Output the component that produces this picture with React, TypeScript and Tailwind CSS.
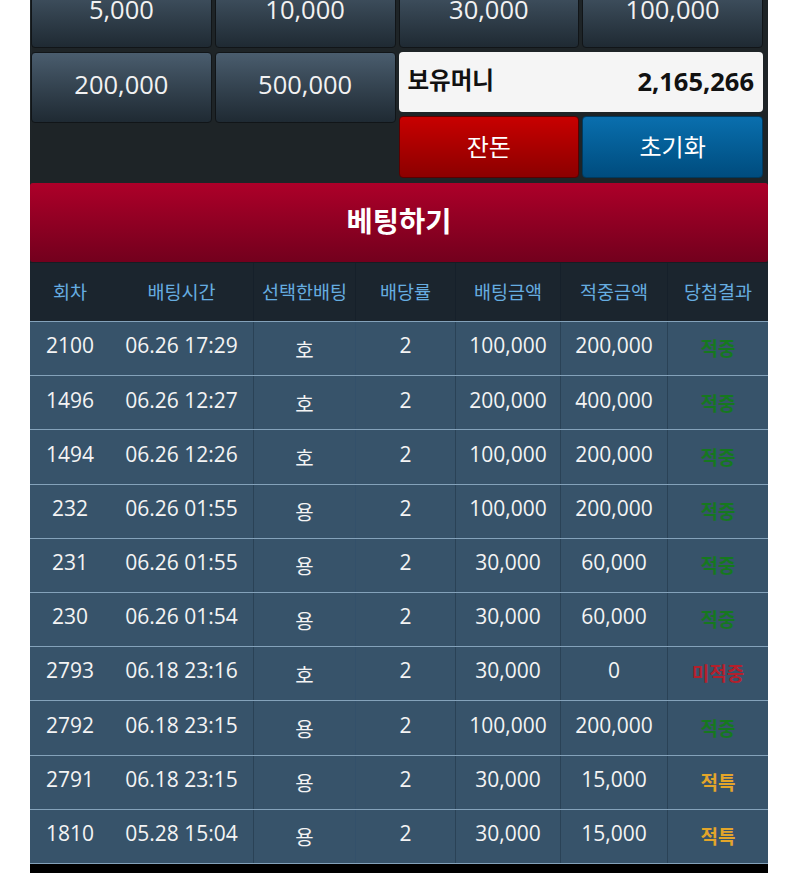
import React from 'react';

type Row = {
  round: string;
  time: string;
  pick: string;
  odds: string;
  bet: string;
  win: string;
  result: '적중' | '미적중' | '적특';
};

const ROWS: Row[] = [
  { round: '2100', time: '06.26 17:29', pick: '호', odds: '2', bet: '100,000', win: '200,000', result: '적중' },
  { round: '1496', time: '06.26 12:27', pick: '호', odds: '2', bet: '200,000', win: '400,000', result: '적중' },
  { round: '1494', time: '06.26 12:26', pick: '호', odds: '2', bet: '100,000', win: '200,000', result: '적중' },
  { round: '232', time: '06.26 01:55', pick: '용', odds: '2', bet: '100,000', win: '200,000', result: '적중' },
  { round: '231', time: '06.26 01:55', pick: '용', odds: '2', bet: '30,000', win: '60,000', result: '적중' },
  { round: '230', time: '06.26 01:54', pick: '용', odds: '2', bet: '30,000', win: '60,000', result: '적중' },
  { round: '2793', time: '06.18 23:16', pick: '호', odds: '2', bet: '30,000', win: '0', result: '미적중' },
  { round: '2792', time: '06.18 23:15', pick: '용', odds: '2', bet: '100,000', win: '200,000', result: '적중' },
  { round: '2791', time: '06.18 23:15', pick: '용', odds: '2', bet: '30,000', win: '15,000', result: '적특' },
  { round: '1810', time: '05.28 15:04', pick: '용', odds: '2', bet: '30,000', win: '15,000', result: '적특' },
];

const HEADERS = ['회차', '배팅시간', '선택한배팅', '배당률', '배팅금액', '적중금액', '당첨결과'];

// column widths follow the screenshot (sum 738)
const COLS = 'grid grid-cols-[80px_143px_102px_100px_105px_107px_101px]';

const RESULT_COLOR: Record<Row['result'], string> = {
  적중: 'text-[#16781f]',
  미적중: 'text-[#b3202c]',
  적특: 'text-[#e3a52a]',
};

function ChipButton({ label }: { label: string }) {
  return (
    <button className="h-[71px] rounded-[4px] border border-[#111518] bg-gradient-to-b from-[#4a5d6e] to-[#1f2a33] pb-[7px] text-[25.5px] text-[#f2f2f2]">
      {label}
    </button>
  );
}

export default function App() {
  return (
    <div
      className="min-h-[875px] overflow-hidden bg-white"
      style={{ fontFamily: '"Open Sans", "Noto Sans CJK KR", sans-serif' }}
    >
      <div className="ml-[30px] w-[738px]">
        {/* chip panel */}
        <div className="-mt-[23px] bg-[#1e2427] pb-[4px] pl-[1px] pr-[5px]">
          <div className="grid grid-cols-4 gap-[3px]">
            <ChipButton label="5,000" />
            <ChipButton label="10,000" />
            <ChipButton label="30,000" />
            <ChipButton label="100,000" />
          </div>
          <div className="mt-[4px] grid grid-cols-4 items-start gap-[3px]">
            <ChipButton label="200,000" />
            <ChipButton label="500,000" />
            <div className="col-span-2 flex flex-col gap-[4px]">
              <div className="flex h-[60px] items-center justify-between rounded-[4px] bg-[#f5f5f5] px-[9px] pb-[2px] text-[#111]">
                <span className="text-[23.5px] font-bold">보유머니</span>
                <span className="text-[25.5px] font-bold">2,165,266</span>
              </div>
              <div className="grid h-[62px] grid-cols-2 gap-[3px]">
                <button className="rounded-[4px] border border-[#5a0000] bg-gradient-to-b from-[#c80000] to-[#8c0000] text-[24px] text-white">
                  잔돈
                </button>
                <button className="rounded-[4px] border border-[#003a5e] bg-gradient-to-b from-[#0a6fae] to-[#004c7e] text-[24px] text-white">
                  초기화
                </button>
              </div>
            </div>
          </div>
        </div>

        {/* bet button */}
        <div className="border-t border-[#1e2427] bg-[#1e2427]">
          <button className="flex h-[79px] w-full items-center justify-center rounded-[3px] bg-gradient-to-b from-[#ad0029] to-[#73001d] pb-[2px] text-[28.5px] font-bold text-white">
            베팅하기
          </button>
        </div>

        {/* history table */}
        <div className="border-t border-[#161d23] bg-[#1b252e]">
          <div className={`${COLS} h-[58px] items-center text-center text-[18.5px] text-[#66ade0]`}>
            {HEADERS.map((h, i) => (
              <div
                key={h}
                className={i >= 2 ? 'flex h-full items-center justify-center border-l border-[#16202a]' : 'flex h-full items-center justify-center'}
              >
                {h}
              </div>
            ))}
          </div>
        </div>
        <div className="bg-[#37536a]">
          {ROWS.map((r, idx) => (
            <div
              key={idx}
              className={`${COLS} h-[54.2px] border-t border-[#84a2ba] text-center text-[21px] text-[#f4f4f4]`}
            >
              <div className="flex items-center justify-center pb-[5px]">{r.round}</div>
              <div className="flex items-center justify-center pb-[5px]">{r.time}</div>
              <div className="flex items-center justify-center border-l border-[#2a4256] pt-[4px] text-[20px]">{r.pick}</div>
              <div className="flex items-center justify-center border-l border-[#33506a] pb-[5px]">{r.odds}</div>
              <div className="flex items-center justify-center border-l border-[#2a4256] pb-[5px]">{r.bet}</div>
              <div className="flex items-center justify-center border-l border-[#2a4256] pb-[5px]">{r.win}</div>
              <div className={`flex items-center justify-center border-l border-[#2a4256] pt-[2px] text-[19px] font-bold ${RESULT_COLOR[r.result]}`}>
                {r.result}
              </div>
            </div>
          ))}
          <div className="border-t border-[#84a2ba]" />
        </div>
        <div className="h-[9px] bg-black" />
      </div>
    </div>
  );
}
